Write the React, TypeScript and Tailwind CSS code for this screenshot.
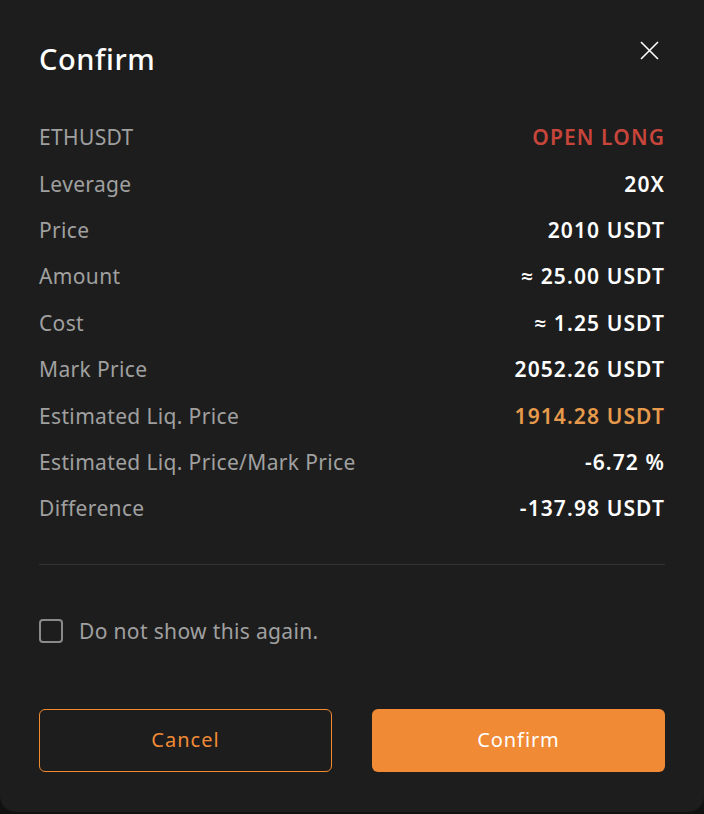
import React from "react";

const ROWS: { label: string; value: string; tone?: "red" | "orange" }[] = [
    { label: "ETHUSDT", value: "OPEN LONG", tone: "red" },
    { label: "Leverage", value: "20X" },
    { label: "Price", value: "2010 USDT" },
    { label: "Amount", value: "≈ 25.00 USDT" },
    { label: "Cost", value: "≈ 1.25 USDT" },
    { label: "Mark Price", value: "2052.26 USDT" },
    { label: "Estimated Liq. Price", value: "1914.28 USDT", tone: "orange" },
    { label: "Estimated Liq. Price/Mark Price", value: "-6.72 %" },
    { label: "Difference", value: "-137.98 USDT" },
];

export default function App() {
    return (
        <div className="min-h-screen bg-[#111111] font-['Noto_Sans','Open_Sans',sans-serif]">
            <div className="relative bg-[#1d1d1d] rounded-b-2xl px-[39px] pb-[40px] h-[812px]">
                {/* Header */}
                <div className="flex items-start justify-between pt-[40px]">
                    <h1 className="text-[29px] leading-[38px] font-medium tracking-[0.6px] text-white">Confirm</h1>
                    <button className="mt-[1px] mr-[6px] w-[19px] h-[19px] text-white">
                        <svg viewBox="0 0 19 19" className="w-[19px] h-[19px]" fill="none" stroke="currentColor" strokeWidth="1.6">
                            <path d="M1 1L18 18M18 1L1 18" />
                        </svg>
                    </button>
                </div>

                {/* Order details */}
                <div className="mt-[36px]">
                    {ROWS.map((row) => (
                        <div key={row.label} className="flex items-center justify-between h-[46.4px] text-[21px] leading-[28px]">
                            <span className="text-[#a0a0a0] tracking-[0.35px]">{row.label}</span>
                            <span
                                className={`font-semibold tracking-[1.1px] ${
                                    row.tone === "red"
                                        ? "text-[#c8453b]"
                                        : row.tone === "orange"
                                        ? "text-[#e79a4b]"
                                        : "text-white"
                                }`}
                            >
                                {row.value}
                            </span>
                        </div>
                    ))}
                </div>

                <div className="mt-[32px] h-px bg-[#333333]" />

                {/* Checkbox */}
                <label className="mt-[54px] flex items-center gap-[16px] h-[24px]">
                    <span className="w-[24px] h-[24px] rounded-[4px] border-2 border-[#8a8a8a]" />
                    <span className="text-[21px] leading-[28px] tracking-[0.35px] text-[#a0a0a0]">Do not show this again.</span>
                </label>

                {/* Actions */}
                <div className="mt-[66px] grid grid-cols-2 gap-10">
                    <button className="h-[63px] rounded-[6px] border border-[#f28a30] text-[#f08a35] text-[20px] tracking-[1px]">
                        Cancel
                    </button>
                    <button className="h-[63px] rounded-[6px] bg-[#f08a35] text-white text-[20px] tracking-[0.9px]">
                        Confirm
                    </button>
                </div>
            </div>
        </div>
    );
}
